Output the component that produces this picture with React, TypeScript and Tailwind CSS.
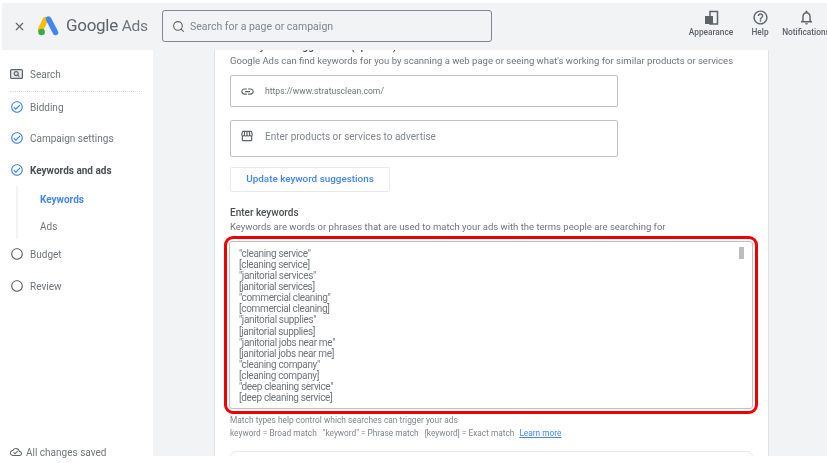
import React from "react";
import { X, Search } from "lucide-react";
import {
  MdLink,
  MdOutlineStorefront,
  MdHelpOutline,
  MdOutlineNotifications,
  MdOutlineCheckCircle,
  MdRadioButtonUnchecked,
  MdOutlineCloudDone,
} from "react-icons/md";

const keywords = [
  '"cleaning service"',
  "[cleaning service]",
  '"janitorial services"',
  "[janitorial services]",
  '"commercial cleaning"',
  "[commercial cleaning]",
  '"janitorial supplies"',
  "[janitorial supplies]",
  '"janitorial jobs near me"',
  "[janitorial jobs near me]",
  '"cleaning company"',
  "[cleaning company]",
  '"deep cleaning service"',
  "[deep cleaning service]",
];

const AdsLogo = () => (
  <svg width="21" height="20" viewBox="0 0 21 20" className="shrink-0">
    <path d="M7.5 3.5 L2.5 14" stroke="#fbbc04" strokeWidth="5.5" strokeLinecap="round" />
    <path d="M10.5 3 L17.5 16.5" stroke="#4285f4" strokeWidth="5.5" strokeLinecap="round" />
    <circle cx="3.6" cy="16" r="3.3" fill="#34a853" />
  </svg>
);

const AppearanceIcon = () => (
  <svg width="15" height="15" viewBox="0 0 15 15" fill="none">
    <path d="M1 6h5v8H1z" fill="#5f6368" />
    <path d="M6 1.5h7.5V14H6z" stroke="#5f6368" strokeWidth="1.5" />
    <path d="M6 6h3v8H6z" fill="#5f6368" />
  </svg>
);

const SearchStepIcon = () => (
  <svg width="13" height="11" viewBox="0 0 13 11" fill="none" className="shrink-0">
    <rect x="0.6" y="0.6" width="11.8" height="8.8" rx="1" stroke="#5f6368" strokeWidth="1.2" fill="#e8eaed" />
    <circle cx="6.2" cy="4.6" r="2" stroke="#5f6368" strokeWidth="1.1" />
    <path d="M7.7 6.1 9.3 7.6" stroke="#5f6368" strokeWidth="1.1" />
  </svg>
);

const HeaderAction = ({ icon, label, className }: { icon: React.ReactNode; label: string; className: string }) => (
  <div className={`flex flex-col items-center shrink-0 mb-[6px] ${className}`}>
    <div className="h-[17px] flex items-center">{icon}</div>
    <span className="text-[8.3px] leading-[10px] mt-[1px] font-medium text-[#5f6368] whitespace-nowrap">{label}</span>
  </div>
);

const StepRow = ({ label, done, bold, className }: { label: string; done?: boolean; bold?: boolean; className: string }) => (
  <div className={`flex items-center ${className}`}>
    <div className="w-[30px] pl-[10px] shrink-0 mt-[-2px]">
      {done ? (
        <MdOutlineCheckCircle size={14} color="#4285f4" />
      ) : (
        <MdRadioButtonUnchecked size={14} color="#5f6368" />
      )}
    </div>
    <span className={`text-[10px] leading-[12px] ${bold ? "font-bold text-[#4a4d51]" : "text-[#70757a]"}`}>{label}</span>
  </div>
);

export default function App() {
  return (
    <div
      className="w-[827px] h-[463px] overflow-hidden bg-white pt-[3px] blur-[0.5px]"
      style={{ fontFamily: "Roboto, 'Noto Sans', sans-serif" }}
    >
      {/* Top bar */}
      <header className="h-[47px] ml-[2px] pb-[1px] bg-[#f1f3f4] flex items-center relative z-10 overflow-hidden">
        <X className="ml-[11px] text-[#5f6368] shrink-0" size={13} strokeWidth={2} />
        <div className="ml-[12px]">
          <AdsLogo />
        </div>
        <span className="ml-[7px] w-[87px] shrink-0 text-[17px] leading-none tracking-[-0.3px] text-[#5f6368] whitespace-nowrap">
          Google <span className="text-[#70757a] text-[15.5px]">Ads</span>
        </span>
        <div className="ml-[9px] w-[330px] h-[32px] shrink-0 border border-[#80868b] rounded-[3px] flex items-center pl-[9px]">
          <Search size={13} strokeWidth={2} className="text-[#5f6368]" />
          <span className="ml-[5px] mt-[1px] text-[10.5px] text-[#80868b]">Search for a page or campaign</span>
        </div>
        <HeaderAction className="ml-[196px] w-[46px]" icon={<AppearanceIcon />} label="Appearance" />
        <HeaderAction className="ml-[15px] w-[22px]" icon={<MdHelpOutline size={17} color="#5f6368" />} label="Help" />
        <HeaderAction className="ml-[11px] w-[48px]" icon={<MdOutlineNotifications size={17} color="#5f6368" />} label="Notifications" />
      </header>

      <div className="h-[406px] flex">
        {/* Step sidebar */}
        <aside className="w-[153px] shrink-0 bg-white flex flex-col">
          <div className="h-[42px] flex flex-col pt-[8px]">
            <div className="h-[33px] flex items-center">
              <div className="w-[30px] pl-[10px] shrink-0">
                <SearchStepIcon />
              </div>
              <span className="text-[10px] text-[#70757a]">Search</span>
            </div>
            <div className="ml-[10px] w-[132px] border-b border-dotted border-[#dadce0]" />
          </div>
          <StepRow label="Bidding" done className="h-[31px]" />
          <StepRow label="Campaign settings" done className="h-[32px]" />
          <StepRow label="Keywords and ads" done bold className="h-[31px]" />
          <div className="ml-[16px] border-l-2 border-[#f1f3f4] h-[53px] pl-[22px] text-[10px]">
            <div className="h-[27px] pt-[6px] font-bold text-[#4285f4]">Keywords</div>
            <div className="h-[26px] pt-[6px] text-[#70757a]">Ads</div>
          </div>
          <StepRow label="Budget" className="h-[32px]" />
          <StepRow label="Review" className="h-[31px]" />
          <div className="mt-auto flex items-center pl-[10px] h-[14px] mb-[-3px]">
            <MdOutlineCloudDone size={12} color="#5f6368" />
            <span className="ml-[4px] text-[10px] text-[#70757a]">All changes saved</span>
          </div>
        </aside>

        {/* Main column */}
        <main className="flex-1 bg-[#f1f3f4] pl-[61px]">
          <section className="w-[555px] h-[406px] bg-white border-x border-[#e0e2e5] overflow-hidden pl-[15px]">
            <h3 className="mt-[-9px] text-[10.5px] leading-[12px] font-medium text-[#4a4d51]">
              Get keyword suggestions (optional)
            </h3>
            <p className="mt-[1px] text-[9.53px] leading-[13px] text-[#70757a] whitespace-nowrap">
              Google Ads can find keywords for you by scanning a web page or seeing what's working for similar products or services
            </p>

            <div className="mt-[8px] w-[388px] h-[32px] border border-[#bdc1c6] rounded-[2px] flex items-center pl-[9px]">
              <MdLink size={15} color="#5f6368" />
              <span className="ml-[10px] text-[8.6px] text-[#70757a]">https://www.stratusclean.com/</span>
            </div>
            <div className="mt-[13px] w-[388px] h-[37px] border border-[#bdc1c6] rounded-[2px] flex items-center pl-[9px] pb-[5px]">
              <MdOutlineStorefront size={14} color="#5f6368" />
              <span className="ml-[11px] text-[10px] text-[#80868b]">Enter products or services to advertise</span>
            </div>
            <button className="block mt-[10px] w-[160px] h-[25px] border border-[#e8eaed] rounded-[2px] text-[9.9px] font-medium text-[#4285f4]">
              Update keyword suggestions
            </button>

            <h3 className="mt-[15px] text-[10px] leading-[12px] font-medium text-[#4a4d51]">Enter keywords</h3>
            <p className="mt-[1px] text-[9.5px] leading-[14px] text-[#70757a] whitespace-nowrap">
              Keywords are words or phrases that are used to match your ads with the terms people are searching for
            </p>

            {/* Highlighted keyword box */}
            <div className="ml-[-6px] mt-[2px] w-[534px] h-[178px] border-[3px] border-[#f00000] rounded-[9px] p-[2px]">
              <div className="relative h-full border border-[#bdc1c6] rounded-[3px] pl-[9px] pt-[6px] text-[10px] leading-[11.08px] text-[#70757a] tracking-[-0.35px]">
                {keywords.map((k) => (
                  <div key={k}>{k}</div>
                ))}
                <div className="absolute top-[5px] right-[8px] w-[5px] h-[12px] bg-[#bdbdbd]" />
              </div>
            </div>

            <p className="mt-[1px] text-[8.4px] leading-[10px] text-[#80868b]">Match types help control which searches can trigger your ads</p>
            <p className="mt-[3px] text-[8.3px] leading-[10px] text-[#80868b] whitespace-nowrap">
              keyword = Broad match<span className="ml-[6px]">"keyword" = Phrase match</span>
              <span className="ml-[6px]">[keyword] = Exact match</span>
              <span className="ml-[5px] text-[#4285f4] underline">Learn more</span>
            </p>
            <div className="mt-[13px] w-[523px] h-[20px] border border-[#e8eaed] rounded-[6px]" />
          </section>
        </main>
      </div>
    </div>
  );
}
